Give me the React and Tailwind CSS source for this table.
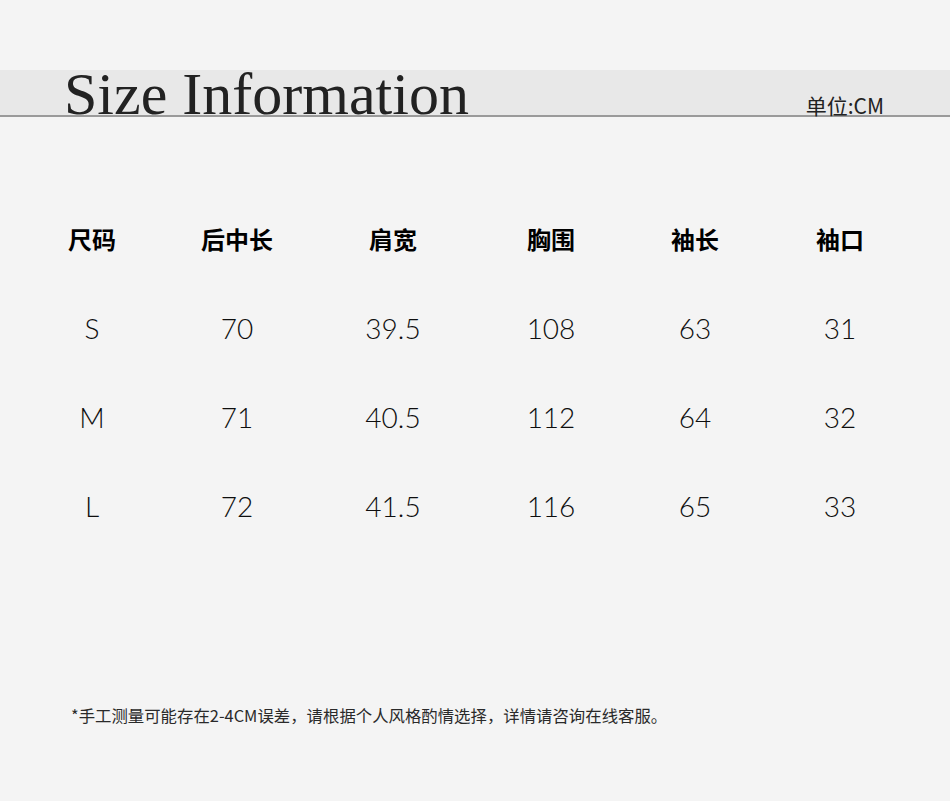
import React from 'react'

const headers = ['尺码', '后中长', '肩宽', '胸围', '袖长', '袖口']

const rows = [
  ['S', '70', '39.5', '108', '63', '31'],
  ['M', '71', '40.5', '112', '64', '32'],
  ['L', '72', '41.5', '116', '65', '33'],
]

const cjk = { fontFamily: '"Noto Sans CJK SC", "Noto Sans", sans-serif' }
const nums = { fontFamily: 'Lato, "Noto Sans CJK SC", sans-serif' }

const gridCols = 'grid grid-cols-[144px_146px_166px_150px_138px_152px] ml-[20px]'

export default function App() {
  return (
    <div className="w-[950px] h-[801px] bg-[#f4f4f4] overflow-hidden">
      {/* Title band */}
      <div className="mt-[70px] h-[47px] bg-[#e8e8e8] border-b-2 border-[#9a9a9a] flex justify-between items-start">
        <h1
          className="pl-[64px] text-[60px] leading-[49px] text-[#222]"
          style={{ fontFamily: '"Liberation Serif", serif' }}
        >
          Size Information
        </h1>
        <span className="pr-[66px] pt-[23px] text-[21px] leading-[24px] text-[#222]" style={cjk}>
          单位:CM
        </span>
      </div>

      {/* Size table */}
      <div className="mt-[77px]">
        <div className={gridCols}>
          {headers.map((h) => (
            <div key={h} className="h-[89px] flex items-center justify-center text-[24px] font-bold text-black" style={cjk}>
              {h}
            </div>
          ))}
        </div>
        {rows.map((row) => (
          <div key={row[0]} className={gridCols}>
            {row.map((cell, i) => (
              <div key={i} className="h-[89px] flex items-center justify-center text-[28px] font-light text-[#0e0e0e]" style={nums}>
                {cell}
              </div>
            ))}
          </div>
        ))}
      </div>

      {/* Footnote */}
      <p className="mt-[153px] pl-[71px] text-[16.4px] leading-[24px] text-[#2a2a2a]" style={cjk}>
        *手工测量可能存在2-4CM误差，请根据个人风格酌情选择，详情请咨询在线客服。
      </p>
    </div>
  )
}
